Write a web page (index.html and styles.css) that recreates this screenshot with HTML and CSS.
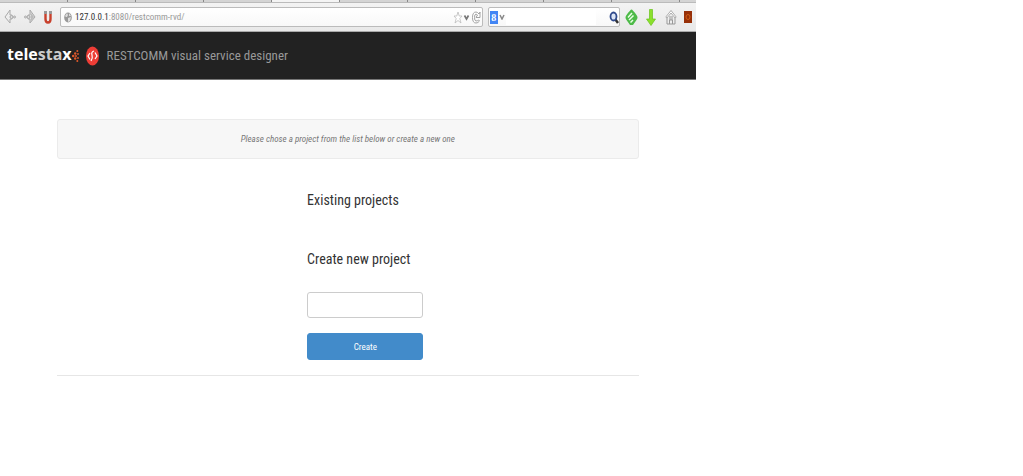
FILE: index.html
```html
<!DOCTYPE html>
<html lang="en">
<head>
<meta charset="utf-8">
<title>RESTCOMM visual service designer</title>
<link rel="stylesheet" href="styles.css">
</head>
<body>
<div class="window">
  <div class="browser">
    <div class="tabs"><i></i><i></i><i></i><i></i><i class="active"></i><i></i><i></i><i></i><i></i><i></i><i class="last"></i></div>
    <div class="toolbar">
      <button class="tool" aria-label="Back"><svg width="12" height="16" viewBox="0 0 12 16"><path d="M6 1L1 8l5 6v-4h2V6H6z" fill="#eee" stroke="#aaa"/><circle cx="7.500" cy="8" r="1.500" fill="#ddd" stroke="#aaa"/><circle cx="10.500" cy="8" r="1" fill="#ddd" stroke="#aaa"/></svg></button>
      <button class="tool forward" aria-label="Forward"><svg width="12" height="16" viewBox="0 0 12 16"><path d="M6 1l5 7-5 6v-4H4V6h2z" fill="#ddd" stroke="#aaa"/><path d="M7 4v8l3-4z" fill="#bbb"/><circle cx="4.500" cy="8" r="1.500" fill="#ddd" stroke="#aaa"/><circle cx="1.500" cy="8" r="1" fill="#ddd" stroke="#aaa"/></svg></button>
      <button class="tool magnet" aria-label="Magnet"><svg width="8" height="13" viewBox="0 0 8 13"><path d="M1.500 0v8q0 3.500 2.500 3.500T6.500 8V0" fill="none" stroke="#c8402c" stroke-width="2.400"/><path d="M0 0h3v3H0zM5 0h3v3H5z" fill="#999"/></svg></button>
      <div class="address">
        <svg width="8" height="11" viewBox="0 0 8 11"><ellipse cx="4" cy="5.500" rx="3.800" ry="5" fill="#999"/><path d="M1 4l2-3 1 2-1 2H2zM4 6l3-1-1 4-2 1zM5 1l2 3H5z" fill="#ddd"/></svg>
        <span class="url"><b>127.0.0.1</b>:8080/restcomm-rvd/</span>
        <svg width="28" height="13" viewBox="0 0 28 13"><path d="M5 1l1.200 4H9L6.800 7.500 8 12 5 9.500 2 12l1.200-4.500L1 5h2.800z" fill="#fff" stroke="#bbb" stroke-width=".8"/><path d="M11.500 4.500l2 3.500 2-3.500" fill="none" stroke="#777" stroke-width="1.700"/><path d="M26 3Q24.500 1 23 1q-3.500 0-3.500 5.500T23 12q2 0 3.500-2l-1-1q-1 1-2.500 1-1.500 0-1.500-3.500T23 3l1.500 1-1.500 2.500h4V1z" fill="#fff" stroke="#999" stroke-width=".9"/></svg>
      </div>
      <div class="search">
        <span class="engine">8</span>
        <svg width="6" height="6" viewBox="0 0 6 6"><path d="M1 1l2 4 2-4" fill="none" stroke="#888" stroke-width="1.500"/></svg>
        <input type="text" aria-label="Web search">
        <svg class="lens" width="10" height="13" viewBox="0 0 10 13"><path d="M6 8l3 4" stroke="#333" stroke-width="2.500"/><ellipse cx="4.500" cy="5.500" rx="3" ry="4" fill="#dce5f5" stroke="#304a8c" stroke-width="1.800"/></svg>
      </div>
      <button class="tool" aria-label="Feeds"><svg width="13" height="17" viewBox="0 0 13 17"><path d="M6.500.5q1 0 5 5.500 2 2.500 0 5L8 16H5L1.500 11q-2-2.500 0-5 4-5.500 5-5.500z" fill="#4dba48"/><path d="M3 8.500L7 4M4 11l4.500-4.500M5.500 13.500L8 11" stroke="#e8ffe4" stroke-width="1.500"/></svg></button>
      <button class="tool down" aria-label="Downloads"><svg width="10" height="17" viewBox="0 0 10 17"><path d="M3.500.5h3V10h3L5 16.500.5 10h3z" fill="#8be02c" stroke="#69c31b" stroke-width=".7"/></svg></button>
      <button class="tool home" aria-label="Home"><svg width="12" height="16" viewBox="0 0 12 16"><path d="M2 8v7h8V8" fill="#eee" stroke="#999"/><path d="M.8 8L6 1.500 11.200 8l-1 1L6 4 1.800 9z" fill="#fff" stroke="#999" stroke-width=".8"/><path d="M4 8h4M4 10h4M4.500 15v-4h3v4" fill="none" stroke="#999"/></svg></button>
      <button class="tool badge" aria-label="Extension"><svg width="8" height="12" viewBox="0 0 8 12"><path d="M0 0h8v12H0z" fill="#973009"/><ellipse cx="4" cy="6" rx="2" ry="2.500" fill="none" stroke="#d25d13"/></svg></button>
    </div>
  </div>
  <header class="navbar">
    <span class="brand">tele<span>sta</span>x</span>
    <svg class="spark" width="7" height="14" viewBox="0 0 7 14" fill="#e0592a"><circle cx="1.200" cy="7" r="1.300"/><circle cx="3.200" cy="4.500" r="1.200"/><circle cx="3.200" cy="9.500" r="1.200"/><circle cx="4" cy="7" r="1"/><circle cx="5.300" cy="2" r="1"/><circle cx="5.300" cy="12" r="1"/><circle cx="6" cy="5" r=".9"/><circle cx="6" cy="9" r=".9"/></svg>
    <svg width="13" height="20" viewBox="0 0 13 20"><ellipse cx="6.500" cy="10" rx="6.500" ry="9.500" fill="#ee3d36"/><path d="M4 7L2 10l2 3.500M9 6.500l2 3.500-2 3M8 5Q5 6 6 9t-1 6" fill="none" stroke="#fff" stroke-width="1.200"/></svg>
    <span class="title">RESTCOMM visual service designer</span>
  </header>
  <main class="page">
    <p class="notice">Please chose a project from the list below or create a new one</p>
    <div class="content">
      <h1>Existing projects</h1>
      <form class="create">
        <h1><label for="name">Create new project</label></h1>
        <input id="name" type="text">
        <button type="button">Create</button>
      </form>
    </div>
  </main>
</div>
</body>
</html>
```
FILE: styles.css
```css
* { box-sizing: border-box; }
body { margin: 0; background: #fff; color: #333; font-family: "Roboto Condensed", "Liberation Sans", sans-serif; }
svg { display: block; flex: none; }
.window { width: 68%; }
.browser { background: linear-gradient(#f4f4f4, #e8e8e8); }
.tabs { display: flex; height: 3px; background: #d4d4d4; border-bottom: 1px solid #bbb; }
.tabs i { flex: 0 0 68px; border-right: 1px solid #888; }
.tabs .active { background: #f4f4f4; }
.tabs .last { flex: 1; border: 0; }
.toolbar { display: flex; align-items: center; height: 29px; padding: 0 4px; border-bottom: 1px solid #aaa; }
.tool { flex: none; padding: 0; border: 0; background: none; }
.forward { margin-left: 8px; }
.magnet { margin: 0 8px; }
.address, .search { display: flex; align-items: center; height: 20px; border: 1px solid #bbb; border-radius: 2px; background: linear-gradient(#fff, #f8f8f8); }
.address { flex: 1; padding: 0 1px 0 3px; }
.url { flex: 1; padding-left: 3px; color: #999; font-size: 9px; }
.url b { color: #333; font-weight: 400; }
.search { width: 132px; margin: 0 5px; padding: 0 0 0 1px; gap: 1px; }
.search input { flex: 1; min-width: 0; height: 16px; padding: 0; border: 0; background: #fff; }
.lens { margin-left: 12px; }
.engine { width: 8px; height: 13px; background: #4285f4; color: #fff; font: bold 10px/13px "Liberation Serif", serif; text-align: center; }
.down { margin-left: 8px; }
.home { margin-left: 9px; }
.badge { margin-left: 7px; }
.navbar { display: flex; align-items: center; height: 48px; padding: 0 7px; background: #222; border-bottom: 1px solid #777; color: #999; }
.brand { padding-bottom: 3px; color: #fff; font: bold 16px "Open Sans", sans-serif; }
.brand span { color: #ccc; }
.spark { margin-right: 7px; }
.title { margin-left: 8px; font-size: 13px; }
.page { padding: 39px 57px 0; }
.notice { margin: 0; padding: 12px; border: 1px solid #ebebeb; border-radius: 3px; background: #f7f7f7; color: #777; font-size: 9px; font-style: italic; line-height: 14px; text-align: center; }
.content { padding: 30px 37% 15px 43%; border-bottom: 1px solid #e6e6e6; }
h1 { margin: 0; font-size: 14px; font-weight: 400; line-height: 22px; white-space: nowrap; }
.create { display: grid; grid-template-columns: minmax(0, 1fr); margin-top: 37px; }
.create input { width: 100%; height: 26px; margin: 22px 0 15px; padding: 0 6px; border: 1px solid #ccc; border-radius: 3px; }
.create button { height: 27px; border: 1px solid #428bca; border-radius: 3px; background: #428bca; color: #fff; font: 9px "Roboto Condensed", "Liberation Sans", sans-serif; }
```
